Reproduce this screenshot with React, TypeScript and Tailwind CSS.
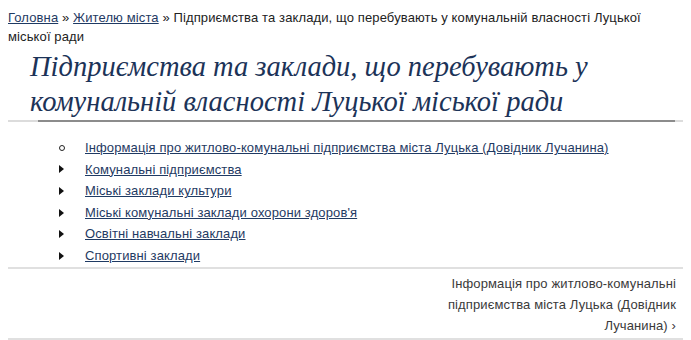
import React from 'react';

const items = [
  { label: 'Інформація про житлово-комунальні підприємства міста Луцька (Довідник Лучанина)', open: true },
  { label: 'Комунальні підприємства' },
  { label: 'Міські заклади культури' },
  { label: "Міські комунальні заклади охорони здоров'я" },
  { label: 'Освітні навчальні заклади' },
  { label: 'Спортивні заклади' },
];

function Marker({ open }: { open?: boolean }) {
  if (open) {
    return <span className="w-[6px] h-[6px] rounded-full border border-[#222] bg-white" />;
  }
  return (
    <svg width="5" height="8" viewBox="0 0 5 8" className="block">
      <path d="M0 0 L5 4 L0 8 Z" fill="#111" />
    </svg>
  );
}

export default function App() {
  return (
    <div className="w-[691px] h-[340px] bg-white px-2 pt-2 text-[13px] tracking-[0.12px] text-[#222] overflow-hidden" style={{ fontFamily: '"Liberation Sans", Arial, sans-serif' }}>
      {/* breadcrumb */}
      <div className="leading-[19px] pr-[36px]">
        <a className="text-[#1f3a63] underline">Головна</a> » <a className="text-[#1f3a63] underline">Жителю міста</a> » Підприємства та заклади, що перебувають у комунальній власності Луцької міської ради
      </div>

      <h1
        className="mt-[3px] pl-[22px] pr-[60px] text-[28.5px] leading-[35px] italic tracking-normal text-[#1c3358]"
        style={{ fontFamily: '"Liberation Serif", Georgia, serif' }}
      >
        Підприємства та заклади, що перебувають у комунальній власності Луцької міської ради
      </h1>
      <div className="mt-px h-[2px] bg-[#dcdcdc] pl-[30px] pr-[8px]">
        <div className="h-[2px] bg-[#8c8c8c]" />
      </div>

      <ul className="mt-[15px] pl-[51px]">
        {items.map((it) => (
          <li key={it.label} className="flex items-center h-[21.6px]">
            <span className="w-[26px] flex items-center">
              <Marker open={it.open} />
            </span>
            <a className="text-[#1f3a63] underline">{it.label}</a>
          </li>
        ))}
      </ul>

      <div className="h-[2px] bg-[#e0e0e0]" />
      <div className="flex justify-end pt-[4px] pb-[2px] pr-[7px]">
        <div className="w-[236px] text-right leading-[21px] text-[#3a3a3a]">
          Інформація про житлово-комунальні підприємства міста Луцька (Довідник Лучанина) ›
        </div>
      </div>
      <div className="h-[2px] bg-[#e0e0e0]" />
    </div>
  );
}
